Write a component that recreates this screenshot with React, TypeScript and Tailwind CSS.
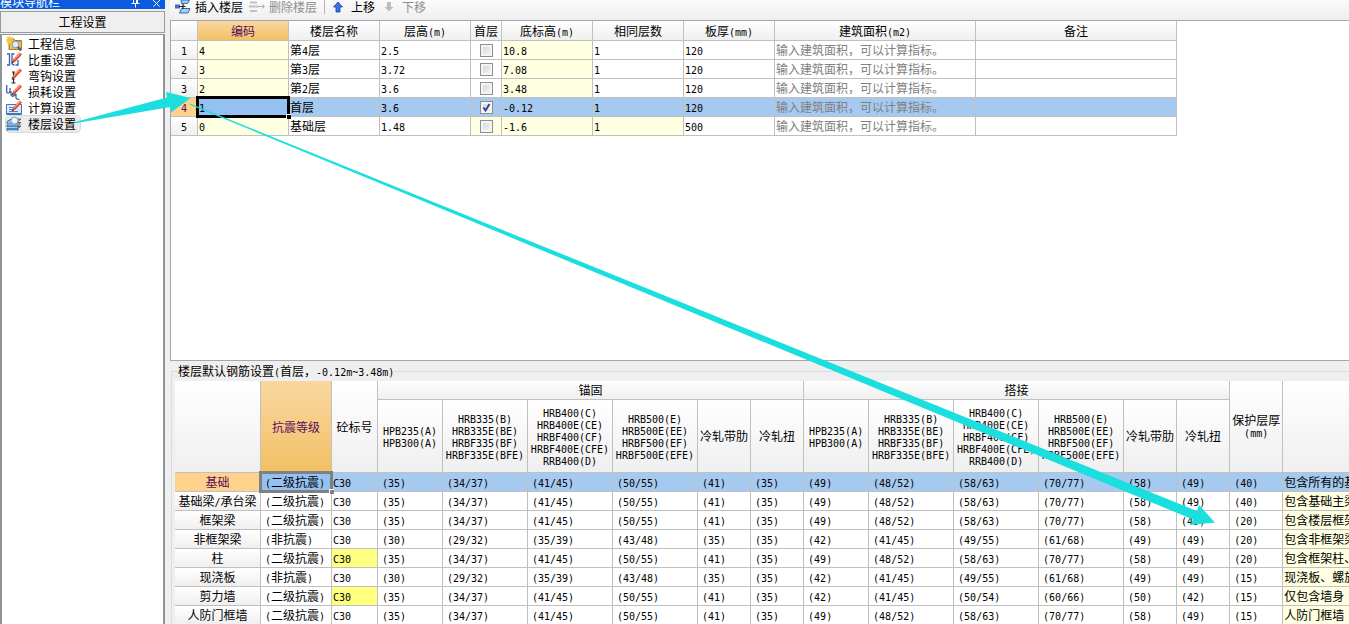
import React from "react";

const CYAN = "#1adfde";

/** Sets half-width runs in a 6px monospace face, so two of them span one CJK glyph. */
function Txt({ children }: { children: string }) {
  const runs = children.split(/([\x21-\x7e]+)/).filter(Boolean);
  return (
    <>
      {runs.map((run, i) =>
        /^[\x21-\x7e]/.test(run) ? (
          <span key={i} className="font-['DejaVu_Sans_Mono','Liberation_Mono',monospace] text-[10px] leading-none">
            {run}
          </span>
        ) : (
          <React.Fragment key={i}>{run}</React.Fragment>
        ),
      )}
    </>
  );
}

const pencil = (
  <>
    <path d="M6 11 7 7.500 13.500 0.500 16 2.500 9.500 9.500z" fill="#e8452f" />
    <path d="M7.800 7.800 14 1.500" stroke="#ff9f85" strokeWidth="1.200" />
    <path d="m5.500 11.500.8-2.500 1.700 1.500z" fill="#3a3a3a" />
  </>
);

const stack = (
  <g stroke="#2d5f96" strokeWidth="0.8">
    <path d="M1 12.500 5 10h10l-3 2.500v2H1z" fill="#3f86c6" />
    <path d="M1 9 5 6.500h10L12 9v2H1z" fill="#5b9fd8" />
    <path d="M1 5.500 5 3h10l-3 2.500v2H1z" fill="#8cc2ec" />
    <path d="M1.500 8h10M1.500 11.500h10M1.500 14.500h10" stroke="#fff" strokeWidth="0.6" />
  </g>
);

const icons: Record<string, React.ReactNode> = {
  info: (
    <>
      <path d="M3 3h5l1 1.500h6.500V13.500H3z" fill="#d9a73c" stroke="#8a6a20" strokeWidth="0.8" />
      <path d="M4 6h11v7H4z" fill="#e9bf5c" />
      <path d="M3.500 0v8M0 4h7.500M1 1l5.500 6M6.500 1 1 7" stroke="#f4c524" strokeWidth="1.400" />
      <circle cx="9.500" cy="8.500" r="3.300" fill="#dceefb" stroke="#7d96b4" />
      <path d="m12 11 3 3.500" stroke="#555" strokeWidth="2" />
    </>
  ),
  ratio: (
    <>
      <path d="M1 2h2.500v11H1M8.500 2H6v9q0 2 2.500 2M9.500 13h2.500V8" fill="none" stroke="#3a62a8" strokeWidth="1.300" />
      {pencil}
    </>
  ),
  hook: (
    <>
      <path d="M6 4h3M7.500 4v3M7.500 10v5M5.500 15h4M6.500 11.500h2" fill="none" stroke="#222" strokeWidth="1.200" />
      {pencil}
    </>
  ),
  loss: (
    <>
      <path d="M0.700 1v7q1 2 3.300 0V4M5 7v4q1.500 2.500 4 0V9M10 10v4q1 2 3.500 1" fill="none" stroke="#3a62a8" strokeWidth="1.300" />
      {pencil}
    </>
  ),
  calc: (
    <>
      <path d="M.5 4.500h15v10H.5z" fill="#dcebfb" stroke="#4377bd" />
      <path d="M1 13.500h14" stroke="#4377bd" />
      <path d="M3 7.500h4M3 9.500h3M3 11.500h9" stroke="#4377bd" strokeWidth="0.9" />
      {pencil}
    </>
  ),
  floor: (
    <>
      {stack}
      <circle cx="8.500" cy="4.500" r="3.500" fill="#e8f4fd" stroke="#8a9db3" />
      <path d="m11 7 3.500 3" stroke="#c98c3a" strokeWidth="2" />
    </>
  ),
};

const navItems = [
  { icon: "info", label: "工程信息" },
  { icon: "ratio", label: "比重设置" },
  { icon: "hook", label: "弯钩设置" },
  { icon: "loss", label: "损耗设置" },
  { icon: "calc", label: "计算设置" },
  { icon: "floor", label: "楼层设置", active: true },
];

function Sidebar() {
  return (
    <aside className="flex w-[165px] shrink-0 flex-col">
      <div className="flex h-[9px] items-end justify-between bg-[#0a5be0] pr-1 text-white">
        <span className="leading-[15px]">模块导航栏</span>
        <span className="flex gap-3">
          <button aria-label="固定" className="block">
            <svg width="9" height="9" viewBox="0 0 9 9" fill="none" stroke="#fff">
              <path d="M2.500 0v3.500M5.500 0v3.500M6.500 0v3.500M0.500 3.500h8M4.500 3.500v4" />
            </svg>
          </button>
          <button aria-label="关闭" className="block">
            <svg width="9" height="9" viewBox="0 0 9 9" fill="none" stroke="#fff">
              <path d="M1 0l6.500 6.500M8 0 1.500 6.500" />
            </svg>
          </button>
        </span>
      </div>
      <h2 className="mt-[2px] h-[22px] border border-[#9a9a9a] bg-[#efefef] text-center leading-5">工程设置</h2>
      <ul className="mt-[1px] flex-1 border-x-2 border-t border-[#8f939a] bg-white pl-1 pt-[1px]">
        {navItems.map((n) => (
          <li key={n.icon} className="h-4">
            <a
              href="#"
              className={
                n.active
                  ? "inline-flex h-4 items-center gap-1 rounded-sm bg-[#ececec] pr-1 ring-1 ring-[#d8d8d8]"
                  : "inline-flex h-4 items-center gap-1 pr-1"
              }
            >
              <svg width="16" height="16" viewBox="0 0 16 16" fill="none">
                {icons[n.icon]}
              </svg>
              <span className="pl-[2px] leading-4">{n.label}</span>
            </a>
          </li>
        ))}
      </ul>
    </aside>
  );
}

function Toolbar() {
  return (
    <div className="flex h-5 shrink-0 items-start bg-linear-to-b from-[#fbfbfb] to-[#eeeeee] pl-[5px]">
      <button className="flex h-[14px] items-center gap-1">
        <svg width="16" height="14" viewBox="0 0 16 14" fill="none">
          <path d="M6 0h8.500l-2 3.500h-6zM6.500 8.500H15L13 13H4.500z" fill="#9fd0f2" stroke="#2d6fb0" />
          <path d="M0 6.500h5" stroke="#4a6fb8" strokeWidth="4" />
          <path d="M4 6.500h6.500M8 4v5" stroke="#222" strokeWidth="1.200" />
        </svg>
        <span className="leading-[14px]">插入楼层</span>
      </button>
      <button disabled className="ml-[6px] flex h-[14px] items-center gap-1 text-[#8d8d8d]">
        <svg width="16" height="14" viewBox="0 0 16 14" fill="none">
          <path d="M1 2.500h7M0 6.500h10M1 11h7" stroke="#c2c2c2" strokeWidth="2" />
          <path d="M10 6.500h5.500M13.500 4.500l2 2-2 2" stroke="#aaa" />
        </svg>
        <span className="leading-[14px]">删除楼层</span>
      </button>
      <span className="ml-[7px] h-[14px] w-px bg-[#b5b5b5]" />
      <button className="ml-[8px] flex h-[14px] items-center gap-2">
        <svg width="10" height="12" viewBox="0 0 10 12">
          <path d="M5 1 9.500 6H7v5H3V6H.5z" fill="#3b74e0" stroke="#1d3f96" strokeWidth="0.8" />
        </svg>
        <span className="leading-[14px]">上移</span>
      </button>
      <button disabled className="ml-[9px] flex h-[14px] items-center gap-2 text-[#8d8d8d]">
        <svg width="10" height="12" viewBox="0 0 10 12">
          <path d="M5 10.500 9.500 6H7V1H3v5H.5z" fill="#bcbcbc" />
        </svg>
        <span className="leading-[14px]">下移</span>
      </button>
    </div>
  );
}

const line = "border-r border-b border-[#c0c0c0]";
const head = "bg-linear-to-b from-white to-[#efefef] font-normal";
const headActive = "bg-linear-to-b from-[#fad7a0] to-[#f2c063] font-normal text-[#5a0a5a]";

type Floor = { code: string; name: string; height: string; base: string; thick: string; first?: boolean; locked?: boolean };

const floors: Floor[] = [
  { code: "4", name: "第4层", height: "2.5", base: "10.8", thick: "120" },
  { code: "3", name: "第3层", height: "3.72", base: "7.08", thick: "120" },
  { code: "2", name: "第2层", height: "3.6", base: "3.48", thick: "120" },
  { code: "1", name: "首层", height: "3.6", base: "-0.12", thick: "120", first: true },
  { code: "0", name: "基础层", height: "1.48", base: "-1.6", thick: "500", locked: true },
];

function FloorTable() {
  const cols = ["编码", "楼层名称", "层高(m)", "首层", "底标高(m)", "相同层数", "板厚(mm)", "建筑面积(m2)", "备注"];
  return (
    <table className="w-[1006px] table-fixed border-separate border-spacing-0">
      <colgroup>
        <col className="w-[27px]" />
        <col className="w-[91px]" />
        <col className="w-[91px]" />
        <col className="w-[91px]" />
        <col className="w-[31px]" />
        <col className="w-[91px]" />
        <col className="w-[91px]" />
        <col className="w-[91px]" />
        <col className="w-[201px]" />
        <col className="w-[201px]" />
      </colgroup>
      <thead>
        <tr className="h-5">
          <th className={`${line} ${head} p-0`} />
          {cols.map((c, i) => (
            <th key={c} className={`${line} ${i === 0 ? headActive : head} p-0 leading-[19px]`}>
              <Txt>{c}</Txt>
            </th>
          ))}
        </tr>
      </thead>
      <tbody>
        {floors.map((f, i) => {
          const sel = !!f.first;
          const base = `${line} h-[19px] whitespace-nowrap py-0 pr-0 pl-px leading-[18px]`;
          const plain = sel ? "bg-[#a6c9ef]" : "bg-white";
          const tint = sel ? "bg-[#a6c9ef]" : "bg-[#ffffe1]";
          return (
            <tr key={f.code}>
              <th className={`${line} ${sel ? "bg-[#ffd28b] font-normal text-[#5a0a5a]" : head} p-0 leading-[18px]`}>
                <Txt>{String(i + 1)}</Txt>
              </th>
              <td className={`${base} relative ${sel ? "bg-[#94c1f2]" : tint}`}>
                <Txt>{f.code}</Txt>
                {sel && (
                  <span className="absolute -top-[2px] -right-[2px] -bottom-[2px] -left-[2px] z-10 border-[3px] border-black">
                    <span className="absolute -right-[4px] -bottom-[4px] size-[5px] border-t border-l border-white bg-black" />
                  </span>
                )}
              </td>
              <td className={`${base} ${plain}`}><Txt>{f.name}</Txt></td>
              <td className={`${base} ${plain}`}><Txt>{f.height}</Txt></td>
              <td className={`${line} p-0 ${f.locked ? tint : plain}`}>
                <span className="relative mx-auto block size-[13px]">
                  <input
                    type="checkbox"
                    aria-label={f.name}
                    defaultChecked={sel}
                    className="block size-[13px] appearance-none border border-[#8e8f8f] bg-linear-to-br from-[#cfd3d8] to-[#f8f8f8] shadow-[inset_0_0_0_2px_#f4f4f4]"
                  />
                  {sel && (
                    <svg className="pointer-events-none absolute inset-0" width="13" height="13" viewBox="0 0 13 13" fill="none">
                      <path d="M3.500 6.500 5.500 9.500 9.500 3" stroke="#31478f" strokeWidth="2" />
                    </svg>
                  )}
                </span>
              </td>
              <td className={`${base} ${tint}`}><Txt>{f.base}</Txt></td>
              <td className={`${base} ${f.locked ? tint : plain}`}><Txt>1</Txt></td>
              <td className={`${base} ${plain}`}><Txt>{f.thick}</Txt></td>
              <td className={`${base} ${plain} text-[#808080]`}>输入建筑面积，可以计算指标。</td>
              <td className={`${base} ${plain}`} />
            </tr>
          );
        })}
      </tbody>
    </table>
  );
}

const steels: string[][] = [
  ["HPB235(A)", "HPB300(A)"],
  ["HRB335(B)", "HRB335E(BE)", "HRBF335(BF)", "HRBF335E(BFE)"],
  ["HRB400(C)", "HRB400E(CE)", "HRBF400(CF)", "HRBF400E(CFE)", "RRB400(D)"],
  ["HRB500(E)", "HRB500E(EE)", "HRBF500(EF)", "HRBF500E(EFE)"],
  ["冷轧带肋"],
  ["冷轧扭"],
];

const second = "(二级抗震)";
const none = "(非抗震)";
const A = ["(35)", "(34/37)", "(41/45)", "(50/55)", "(41)", "(35)"];
const B = ["(30)", "(29/32)", "(35/39)", "(43/48)", "(35)", "(35)"];
const LA = ["(49)", "(48/52)", "(58/63)", "(70/77)", "(58)", "(49)"];
const LB = ["(42)", "(41/45)", "(49/55)", "(61/68)", "(49)", "(49)"];
const LC = ["(42)", "(41/45)", "(50/54)", "(60/66)", "(50)", "(42)"];

const members = [
  { name: "基础", grade: second, values: [...A, ...LA, "(40)"], note: "包含所有的基础" },
  { name: "基础梁/承台梁", grade: second, values: [...A, ...LA, "(40)"], note: "包含基础主梁" },
  { name: "框架梁", grade: second, values: [...A, ...LA, "(20)"], note: "包含楼层框架梁" },
  { name: "非框架梁", grade: none, values: [...B, ...LB, "(20)"], note: "包含非框架梁" },
  { name: "柱", grade: second, values: [...A, ...LA, "(20)"], note: "包含框架柱、", custom: true },
  { name: "现浇板", grade: none, values: [...B, ...LB, "(15)"], note: "现浇板、螺旋板" },
  { name: "剪力墙", grade: second, values: [...A, ...LC, "(15)"], note: "仅包含墙身", custom: true },
  { name: "人防门框墙", grade: second, values: [...A, ...LA, "(15)"], note: "人防门框墙" },
];

function RebarTable() {
  return (
    <table className="w-full table-fixed border-separate border-spacing-0">
      <colgroup>
        <col className="w-[86px]" />
        <col className="w-[71px]" />
        <col className="w-[46px]" />
        <col className="w-[65px]" />
        <col className="w-[85px]" />
        <col className="w-[85px]" />
        <col className="w-[85px]" />
        <col className="w-[53px]" />
        <col className="w-[53px]" />
        <col className="w-[65px]" />
        <col className="w-[85px]" />
        <col className="w-[85px]" />
        <col className="w-[85px]" />
        <col className="w-[53px]" />
        <col className="w-[53px]" />
        <col className="w-[53px]" />
        <col />
      </colgroup>
      <thead>
        <tr className="h-[19px]">
          <th rowSpan={2} className={`${line} ${head} p-0`} />
          <th rowSpan={2} className={`${line} ${headActive} p-0`}>抗震等级</th>
          <th rowSpan={2} className={`${line} ${head} p-0`}>砼标号</th>
          <th colSpan={6} className={`${line} ${head} p-0 leading-[18px]`}>锚固</th>
          <th colSpan={6} className={`${line} ${head} p-0 leading-[18px]`}>搭接</th>
          <th rowSpan={2} className={`${line} ${head} p-0 leading-3`}>
            <span className="block">保护层厚</span>
            <span className="block"><Txt>(mm)</Txt></span>
          </th>
          <th rowSpan={2} className={`border-b border-[#c0c0c0] ${head} p-0`} />
        </tr>
        <tr className="h-[73px]">
          {[...steels, ...steels].map((lines, i) => (
            <th key={i} className={`${line} ${head} p-0 whitespace-nowrap leading-3`}>
              {lines.map((l) => (
                <span key={l} className="block h-3"><Txt>{l}</Txt></span>
              ))}
            </th>
          ))}
        </tr>
      </thead>
      <tbody>
        {members.map((m, i) => {
          const sel = i === 0;
          const base = `${line} h-[19px] whitespace-nowrap py-0 pr-0 leading-[18px]`;
          const plain = sel ? "bg-[#a6c9ef]" : "bg-white";
          return (
            <tr key={m.name}>
              <th className={`${line} ${sel ? "bg-[#ffd28b] font-normal text-[#5a0a5a]" : head} h-[19px] p-0 whitespace-nowrap leading-[18px]`}>
                <Txt>{m.name}</Txt>
              </th>
              <td className={`${base} relative pl-1 ${sel ? "bg-[#94c1f2]" : plain}`}>
                <Txt>{m.grade}</Txt>
                {sel && (
                  <span className="absolute -top-[2px] -right-[2px] -bottom-[2px] -left-[2px] z-10 border-[3px] border-[#808080]">
                    <span className="absolute -right-[4px] -bottom-[4px] size-[5px] border-t border-l border-white bg-[#808080]" />
                  </span>
                )}
              </td>
              <td className={`${base} pl-px ${m.custom ? "bg-[#ffff80]" : plain}`}><Txt>C30</Txt></td>
              {m.values.map((v, j) => (
                <td key={j} className={`${base} pl-1 ${plain}`}><Txt>{v}</Txt></td>
              ))}
              <td className={`h-[19px] overflow-hidden border-b border-[#c0c0c0] py-0 pr-0 pl-px leading-[18px] whitespace-nowrap ${sel ? plain : "bg-[#ffffe1]"}`}>
                {m.note}
              </td>
            </tr>
          );
        })}
      </tbody>
    </table>
  );
}

function Arrows() {
  return (
    <svg className="pointer-events-none absolute top-0 left-0 z-20" width="1349" height="624" viewBox="0 0 1349 624" fill={CYAN}>
      <path d="M75 122 167 97.500 166 92 190.500 98 171 112.500 170.500 107 75 123.200z" />
      <path d="M190 103.500 1197 511 1199 505 1215 522.500 1190 525 1193 519.500 190 104.800z" />
    </svg>
  );
}

export default function App() {
  return (
    <div className="relative flex h-screen overflow-hidden bg-[#efefef] font-['Noto_Sans_CJK_SC',sans-serif] text-[12px] text-black">
      <Sidebar />
      <main className="ml-[5px] flex min-w-0 flex-1 flex-col">
        <Toolbar />
        <section className="h-[341px] shrink-0 border border-r-0 border-[#a8a8ac] bg-white">
          <FloorTable />
        </section>
        <fieldset className="mt-px ml-px min-h-0 min-w-0 flex-1 border-t border-l border-[#d3dde6] pl-[3px]">
          <legend className="ml-[3px] h-[19px] leading-[17px]">
            <Txt>楼层默认钢筋设置(首层，-0.12m~3.48m)</Txt>
          </legend>
          <RebarTable />
        </fieldset>
      </main>
      <Arrows />
    </div>
  );
}
